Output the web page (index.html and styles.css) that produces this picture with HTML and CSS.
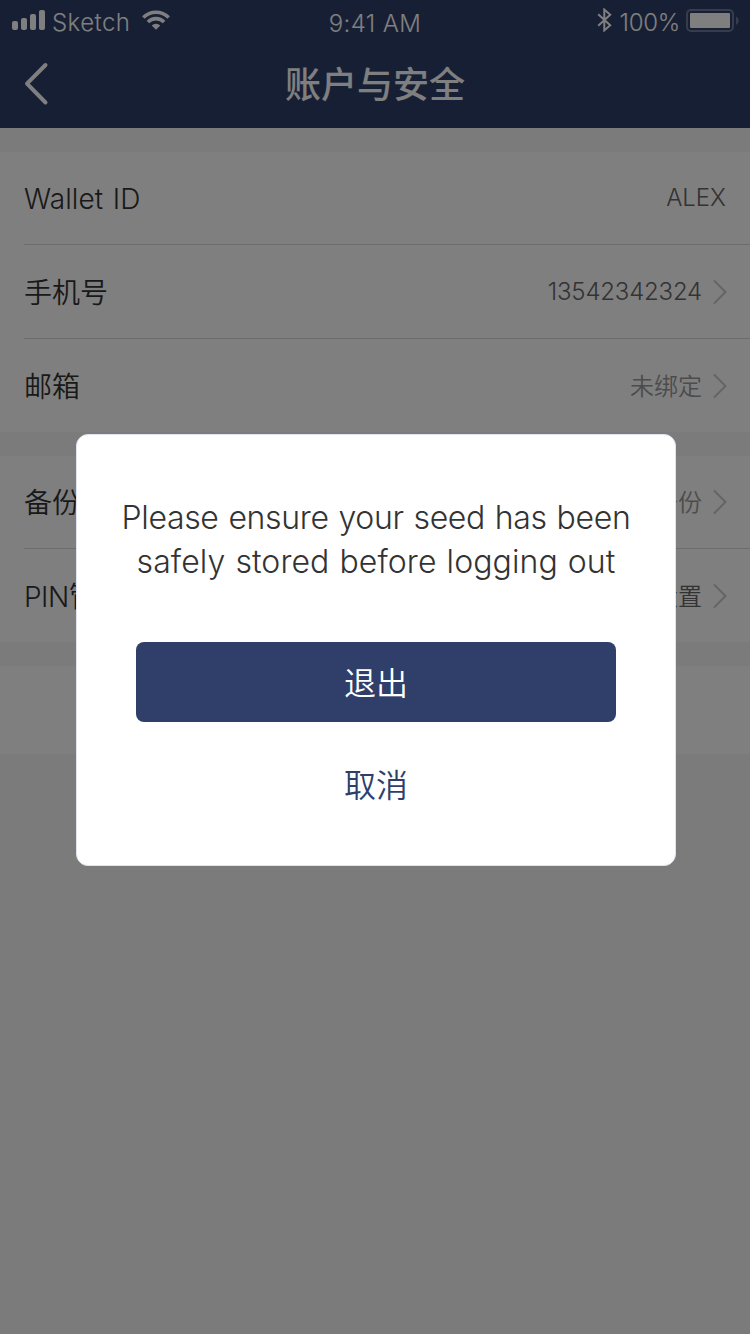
FILE: index.html
```html
<!DOCTYPE html>
<html lang="zh-CN">
<head>
<meta charset="utf-8">
<title>账户与安全</title>
<link rel="stylesheet" href="styles.css">
</head>
<body>
<div class="screen">
  <header class="header">
    <div class="status">
      <div class="status-left">
        <svg class="signal" width="34" height="20" viewBox="0 0 34 20" fill="currentColor"><rect x="0" y="11" width="6" height="9" rx="2"/><rect x="9" y="8" width="6" height="12" rx="2"/><rect x="18" y="4" width="6" height="16" rx="2"/><rect x="27" y="0" width="6" height="20" rx="2"/></svg>
        <span class="carrier">Sketch</span>
        <svg class="wifi" width="28" height="20" viewBox="0 0 30 21"><g fill="none" stroke="currentColor" stroke-width="3.8"><path d="M1.4 7.7A19.3 19.3 0 0 1 28.6 7.7"/><path d="M6.3 12.6A12.4 12.4 0 0 1 23.7 12.6"/></g><path d="M10.4 16.3A6.5 6.5 0 0 1 19.6 16.3L15 20.9Z" fill="currentColor"/></svg>
      </div>
      <span class="time">9:41 AM</span>
      <div class="status-right">
        <svg class="bluetooth" width="16" height="24" viewBox="0 0 16 24" fill="none" stroke="currentColor" stroke-width="2"><path d="M1.2 6.2L13.2 17.2L7.3 22.4V1.6L13.2 6.8L1.2 17.8"/></svg>
        <span class="percent">100%</span>
        <svg class="battery" width="53" height="24" viewBox="0 0 53 24"><rect x="1" y="1" width="46" height="21" rx="4" fill="none" stroke="currentColor" stroke-width="2" opacity=".3"/><rect x="4" y="4" width="40" height="15" rx="1" fill="currentColor"/><path d="M50 7.5Q52.8 9 52.8 11.8T50 16Z" fill="currentColor" opacity=".3"/></svg>
      </div>
    </div>
    <nav class="nav">
      <svg class="back" width="26" height="44" viewBox="0 0 26 44" fill="none" stroke="currentColor" stroke-width="4" stroke-linecap="round" stroke-linejoin="round"><path d="M21.5 3L3 21.6L21.5 40.5"/></svg>
      <h1 class="title">账户与安全</h1>
    </nav>
  </header>

  <main class="content">
    <section class="group">
      <div class="row"><span class="label wallet">Wallet ID</span><span class="value name">ALEX</span></div>
      <div class="row row-tall"><span class="label">手机号</span><span class="value phone">13542342324</span><svg class="chevron" width="14" height="26" viewBox="0 0 14 26"><path d="M1.5 2L12.5 13L1.5 24"/></svg></div>
      <div class="row row-last"><span class="label">邮箱</span><span class="value muted">未绑定</span><svg class="chevron" width="14" height="26" viewBox="0 0 14 26"><path d="M1.5 2L12.5 13L1.5 24"/></svg></div>
    </section>
    <section class="group">
      <div class="row"><span class="label">备份</span><span class="value muted">未备份</span><svg class="chevron" width="14" height="26" viewBox="0 0 14 26"><path d="M1.5 2L12.5 13L1.5 24"/></svg></div>
      <div class="row row-last"><span class="label"><span class="pin">PIN</span>管理</span><span class="value">设置</span><svg class="chevron" width="14" height="26" viewBox="0 0 14 26"><path d="M1.5 2L12.5 13L1.5 24"/></svg></div>
    </section>
    <section class="group logout"></section>
  </main>

  <div class="overlay">
    <div class="dialog" role="dialog">
      <p class="message"><span class="line-one">Please ensure your seed has been</span><br><span class="line-two">safely stored before logging out</span></p>
      <button class="confirm">退出</button>
      <button class="cancel">取消</button>
    </div>
  </div>
</div>
</body>
</html>
```
FILE: styles.css
```css
* { box-sizing: border-box; }
body { margin: 0; font-family: Inter, "Noto Sans CJK SC", sans-serif; font-weight: 350; color: #333; }
svg { display: block; flex: none; }
.screen { position: relative; width: 750px; height: 1334px; overflow: hidden; background: #f7f7f7; }
.header { height: 128px; background: #2f3f6a; color: #fff; }
.status { display: grid; grid-template-columns: 1fr auto 1fr; height: 40px; font-size: 24px; line-height: 28px; }
.status-left, .status-right { display: flex; align-items: flex-start; }
.status-left { padding-left: 12px; }
.signal { margin-top: 10px; }
.carrier { margin: 9px 0 0 6px; letter-spacing: .45px; }
.wifi { margin: 10px 0 0 12px; }
.time { margin-top: 10px; letter-spacing: .4px; }
.status-right { justify-content: flex-end; padding-right: 11px; }
.bluetooth { margin-top: 8px; }
.percent { margin: 9px 6px 0 7px; letter-spacing: -.3px; }
.battery { margin-top: 9px; }
.nav { display: grid; grid-template-columns: 26px 1fr 26px; align-items: center; height: 88px; padding: 0 24px; }
.back { margin: -1px 0 0; }
.title { margin: 0; padding-top: 2px; font-size: 36px; line-height: 50px; font-weight: 500; text-align: center; }
.content { display: flex; flex-direction: column; gap: 24px; padding-top: 24px; }
.group { background: #fff; padding-left: 24px; }
.row { display: flex; align-items: center; height: 93px; padding-right: 24px; border-bottom: 1px solid #d9d9d9; }
.row-tall { height: 94px; }
.row-last { border-bottom: 0; }
.label { flex: 1; padding-top: 2px; font-size: 28px; line-height: 40px; }
.wallet { letter-spacing: .1px; word-spacing: 1.5px; }
.pin { letter-spacing: -.5px; }
.value { padding-top: 2px; font-size: 24px; line-height: 34px; color: #666; }
.name { padding-top: 0; }
.phone { padding-top: 0; letter-spacing: -.2px; }
.muted { color: #999; }
.chevron { margin: 0 -1px 0 11px; fill: none; stroke: #c8c8c8; stroke-width: 2; stroke-linecap: round; stroke-linejoin: round; }
.logout { height: 88px; }
.overlay { position: absolute; inset: 0; background: rgba(0, 0, 0, .5); padding: 434px 74px 0 76px; }
.dialog { display: flex; flex-direction: column; align-items: center; width: 600px; height: 432px; padding-top: 61px; border: 1px solid #dfe4f5; border-radius: 12px; background: #fff; }
.message { margin: 0 0 58px; font-size: 32px; line-height: 44px; text-align: center; white-space: nowrap; }
.line-one { letter-spacing: -.34px; word-spacing: 1.2px; }
.line-two { letter-spacing: .08px; word-spacing: 1px; }
.confirm, .cancel { display: block; padding: 0; border: 0; font: 350 32px/44px Inter, "Noto Sans CJK SC", sans-serif; }
.confirm { width: 480px; height: 80px; padding-top: 4px; border-radius: 8px; background: #2f3f6a; color: #fff; }
.cancel { margin-top: 42px; background: none; color: #2f3f6a; }
```
